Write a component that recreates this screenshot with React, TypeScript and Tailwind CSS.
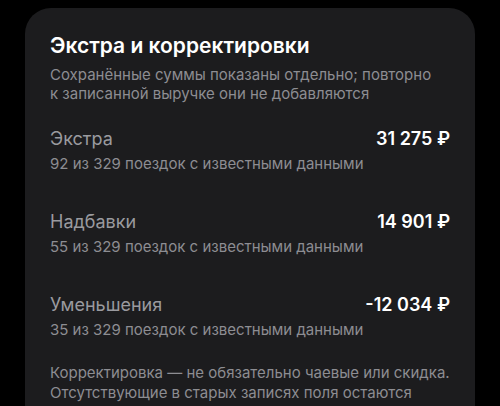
const rows = [
  { label: "Экстра", value: "31 275 ₽", note: "92 из 329 поездок с известными данными" },
  { label: "Надбавки", value: "14 901 ₽", note: "55 из 329 поездок с известными данными" },
  { label: "Уменьшения", value: "-12 034 ₽", note: "35 из 329 поездок с известными данными" },
];

export default function App() {
  return (
    <div
      className="h-[406px] w-[500px] overflow-hidden bg-black pt-2"
      style={{ fontFamily: "Inter, 'Noto Sans', sans-serif" }}
    >
      <div className="mx-[25px] rounded-[26px] bg-[#1c1c1e] px-[25px] pt-[25px] pb-6">
        <h2 className="text-[21px] leading-[26px] font-semibold text-white">
          Экстра и корректировки
        </h2>
        <p className="mt-[6px] text-[15px] leading-[19px] text-[#8d8d92]">
          Сохранённые суммы показаны отдельно; повторно
          <br />
          к записанной выручке они не добавляются
        </p>

        <div className="mt-[24px] flex flex-col gap-[36px]">
          {rows.map((r) => (
            <div key={r.label} className="flex flex-col">
              <div className="flex items-center justify-between">
                <span className="text-[18px] leading-[24px] text-[#9a9a9f]">{r.label}</span>
                <span className="text-[18px] leading-[24px] font-semibold text-white">{r.value}</span>
              </div>
              <span className="mt-[3px] text-[15px] leading-[20px] text-[#8d8d92]">{r.note}</span>
            </div>
          ))}
        </div>

        <p className="mt-[23px] text-[15px] leading-[20px] text-[#8d8d92]">
          Корректировка — не обязательно чаевые или скидка. Отсутствующие в старых записях поля остаются пустыми
        </p>
      </div>
    </div>
  );
}
